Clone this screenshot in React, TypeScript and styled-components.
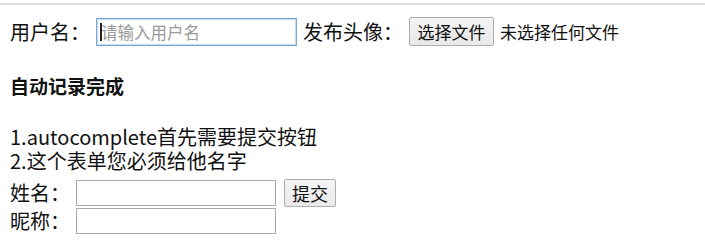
import React from 'react';
import styled, { createGlobalStyle } from 'styled-components';

const GlobalStyle = createGlobalStyle`
  html, body {
    margin: 0;
    padding: 0;
    background: #fff;
  }
  body {
    font-family: "Noto Sans CJK SC", "Noto Sans", sans-serif;
    color: #111;
  }
`;

const TopRule = styled.div`
  margin-top: 3px;
  height: 2px;
  background: #dedede;
`;

const Page = styled.div`
  padding: 0 10px;
`;

const Row = styled.div<{ $top?: number; $gap?: number }>`
  display: flex;
  align-items: center;
  gap: ${p => p.$gap ?? 6}px;
  margin-top: ${p => p.$top ?? 0}px;
`;

const Label = styled.span`
  font-size: 20px;
  line-height: 28px;
  white-space: nowrap;
`;

const FieldWrap = styled.span`
  position: relative;
  display: inline-flex;

  &::before {
    content: '';
    position: absolute;
    left: 4px;
    top: 5px;
    width: 2px;
    height: 18px;
    background: #222;
  }
`;

const TextInput = styled.input<{ $w: number; $h: number; $focused?: boolean }>`
  box-sizing: border-box;
  width: ${p => p.$w}px;
  height: ${p => p.$h}px;
  margin: 0;
  padding: 0 4px;
  font-family: "Noto Sans CJK SC", sans-serif;
  font-size: 16.5px;
  background: #fff;
  border: 1px solid ${p => (p.$focused ? '#7aa7d9' : '#a9a9a9')};
  box-shadow: ${p => (p.$focused ? 'inset 0 0 0 1px #c7dcf2' : 'none')};
  outline: none;
  border-radius: 0;

  &::placeholder {
    color: #9a9a9a;
  }
`;

const Button = styled.button<{ $w: number; $h: number; $size?: number }>`
  box-sizing: border-box;
  width: ${p => p.$w}px;
  height: ${p => p.$h}px;
  margin: 0;
  padding: 0;
  font-family: "Noto Sans CJK SC", sans-serif;
  font-size: ${p => p.$size ?? 17}px;
  color: #111;
  background: linear-gradient(#f4f4f4, #e9e9e9);
  border: 1px solid #adadad;
  border-radius: 2px;
`;

const FileNote = styled.span`
  font-size: 17px;
  line-height: 28px;
`;

const Title = styled.h4`
  margin: 26px 0 0;
  font-size: 19px;
  line-height: 28px;
  font-weight: 700;
`;

const Notes = styled.div`
  margin-top: 25px;
  font-size: 20px;
  line-height: 24px;
`;

const Form = styled.div`
  display: flex;
  flex-direction: column;
  gap: 0;
  margin-top: 6px;
`;

export default function App() {
  return (
    <>
      <GlobalStyle />
      <TopRule />
      <Page>
        <Row $top={12}>
          <Label>用户名：</Label>
          <FieldWrap>
            <TextInput $w={201} $h={28} $focused placeholder="请输入用户名" />
          </FieldWrap>
          <Label>发布头像：</Label>
          <Button $w={85} $h={29}>选择文件</Button>
          <FileNote>未选择任何文件</FileNote>
        </Row>
        <Title>自动记录完成</Title>
        <Notes>
          <div>1.autocomplete首先需要提交按钮</div>
          <div>2.这个表单您必须给他名字</div>
        </Notes>
        <Form>
          <Row $gap={8}>
            <Label style={{ marginRight: -2 }}>姓名：</Label>
            <TextInput $w={200} $h={26} />
            <Button $w={52} $h={28} $size={18}>提交</Button>
          </Row>
          <Row>
            <Label>昵称：</Label>
            <TextInput $w={200} $h={26} />
          </Row>
        </Form>
      </Page>
    </>
  );
}
